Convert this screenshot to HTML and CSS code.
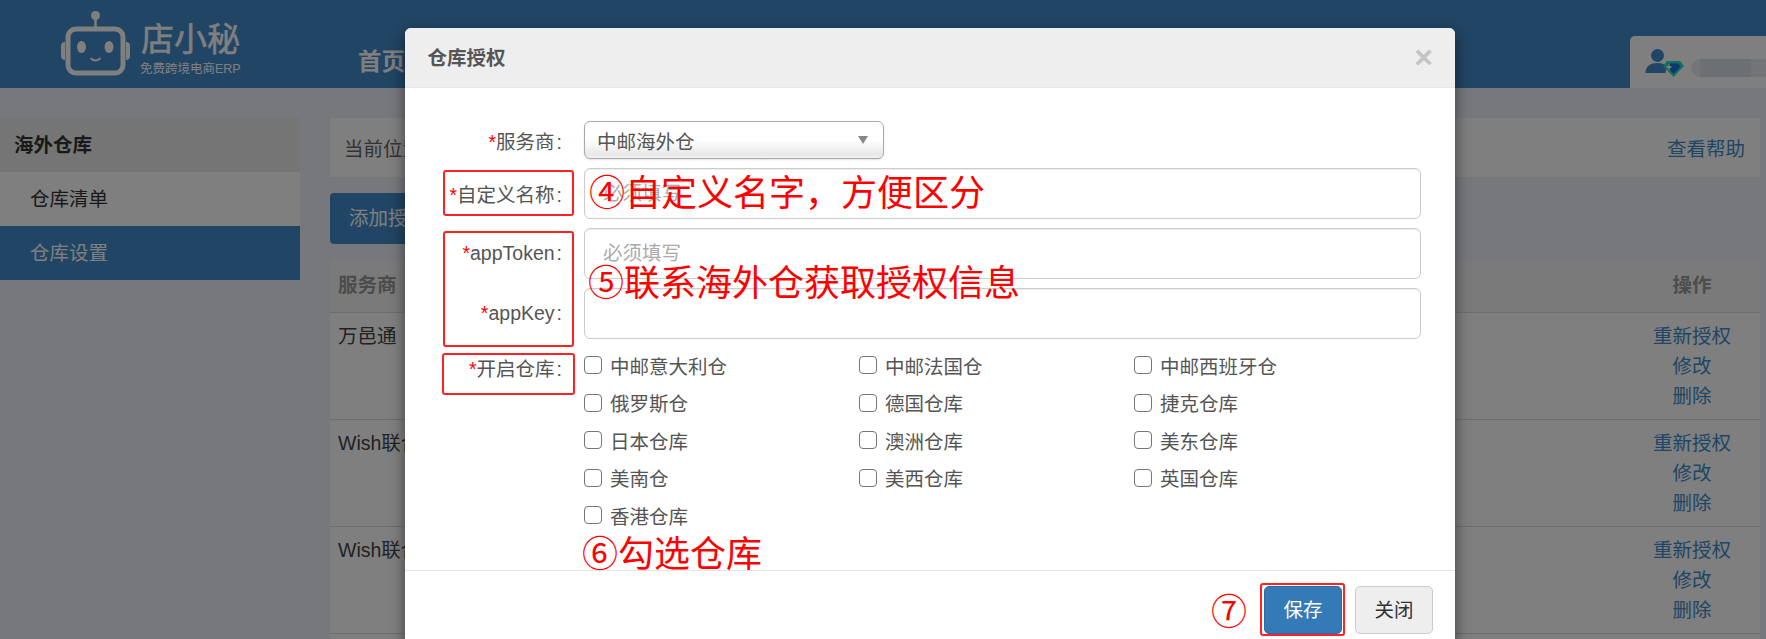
FILE: index.html
```html
<!DOCTYPE html>
<html lang="zh-CN">
<head>
<meta charset="utf-8">
<title>仓库授权</title>
<link rel="stylesheet" href="styles.css">
</head>
<body>
<div class="page">
  <header class="topbar">
    <div class="logo">
      <svg class="robot" width="72" height="66" viewBox="0 0 72 66" fill="none">
        <circle cx="35.500" cy="5.500" r="4.500" fill="#fff"/>
        <path d="M35.500 9v10" stroke="#fff" stroke-width="2.500"/>
        <rect x="8" y="19" width="55" height="44" rx="8" stroke="#fff" stroke-width="5"/>
        <path d="M5 32a4 4 0 0 0-4 4v10a4 4 0 0 0 4 4zM66 32a4 4 0 0 1 4 4v10a4 4 0 0 1-4 4z" fill="#fff"/>
        <ellipse cx="21.500" cy="37" rx="4.500" ry="6" fill="#fff"/>
        <ellipse cx="49" cy="37" rx="4.500" ry="6" fill="#fff"/>
        <path d="M31 48.500q4.500 4 9 0" stroke="#fff" stroke-width="1.800" stroke-linecap="round"/>
      </svg>
      <div class="logo-text">
        <div class="logo-name">店小秘</div>
        <div class="logo-sub">免费跨境电商ERP</div>
      </div>
    </div>
    <nav class="nav"><a class="nav-item">首页</a></nav>
    <div class="user-tab">
      <svg class="user-icon" width="40" height="28" viewBox="0 0 40 28">
        <circle cx="12.500" cy="6.500" r="6.500" fill="#428bca"/>
        <path d="M0.500 24c0-7 5-10 12-10 4 0 7 1 9 3l-1 7z" fill="#428bca"/>
        <path d="M22 12h13l4 5-10.500 11L18 17z" fill="#20dcc8"/>
        <path d="M25 14.500h8l2.500 3-7 7.500-6-7.500z" fill="#1a6fd0"/>
        <path d="M24 14.500l1 2.500 2.500 1-2.500 1-1 2.500-1-2.500-2.500-1 2.500-1z" fill="#fff"/>
      </svg>
      <div class="user-name"></div>
    </div>
  </header>

  <main class="main">
    <aside class="sidebar">
      <div class="side-title">海外仓库</div>
      <a class="side-item">仓库清单</a>
      <a class="side-item is-active">仓库设置</a>
    </aside>
    <section class="content">
      <div class="crumb">
        <span>当前位置</span>
        <a class="link">查看帮助</a>
      </div>
      <div class="toolbar"><a class="add-btn">添加授权</a></div>
      <table class="table">
        <thead>
          <tr><th>服务商</th><th class="col-actions">操作</th></tr>
        </thead>
        <tbody>
          <tr>
            <td>万邑通</td>
            <td class="col-actions"><a class="link">重新授权</a><a class="link">修改</a><a class="link">删除</a></td>
          </tr>
          <tr>
            <td>Wish联合</td>
            <td class="col-actions"><a class="link">重新授权</a><a class="link">修改</a><a class="link">删除</a></td>
          </tr>
          <tr>
            <td>Wish联合</td>
            <td class="col-actions"><a class="link">重新授权</a><a class="link">修改</a><a class="link">删除</a></td>
          </tr>
          <tr><td></td><td></td></tr>
        </tbody>
      </table>
    </section>
  </main>

  <div class="backdrop"></div>

  <div class="modal">
    <div class="modal-head">
      <h4 class="modal-title">仓库授权</h4>
      <span class="modal-close">×</span>
    </div>
    <form class="modal-body">
      <label class="field-label"><i>*</i>服务商<b>:</b></label>
      <div class="select-wrap">
        <select class="select"><option>中邮海外仓</option></select>
        <span class="select-arrow"></span>
      </div>

      <label class="field-label"><i>*</i>自定义名称<b>:</b></label>
      <input class="input" type="text" placeholder="必须填写">

      <label class="field-label"><i>*</i>appToken<b>:</b></label>
      <input class="input" type="text" placeholder="必须填写">

      <label class="field-label"><i>*</i>appKey<b>:</b></label>
      <input class="input" type="text">

      <label class="field-label field-label-top"><i>*</i>开启仓库<b>:</b></label>
      <div class="checks">
        <label class="check"><input type="checkbox">中邮意大利仓</label>
        <label class="check"><input type="checkbox">中邮法国仓</label>
        <label class="check"><input type="checkbox">中邮西班牙仓</label>
        <label class="check"><input type="checkbox">俄罗斯仓</label>
        <label class="check"><input type="checkbox">德国仓库</label>
        <label class="check"><input type="checkbox">捷克仓库</label>
        <label class="check"><input type="checkbox">日本仓库</label>
        <label class="check"><input type="checkbox">澳洲仓库</label>
        <label class="check"><input type="checkbox">美东仓库</label>
        <label class="check"><input type="checkbox">美南仓</label>
        <label class="check"><input type="checkbox">美西仓库</label>
        <label class="check"><input type="checkbox">英国仓库</label>
        <label class="check"><input type="checkbox">香港仓库</label>
      </div>
    </form>
    <div class="modal-foot">
      <button class="btn btn-primary" type="button">保存</button>
      <button class="btn" type="button">关闭</button>
    </div>
  </div>

  <div class="mark mark-name"></div>
  <div class="mark mark-keys"></div>
  <div class="mark mark-wh"></div>
  <div class="mark mark-save"></div>
  <div class="note note-4">④自定义名字，方便区分</div>
  <div class="note note-5">⑤联系海外仓获取授权信息</div>
  <div class="note note-6">⑥勾选仓库</div>
  <div class="note note-7">⑦</div>
</div>
</body>
</html>
```
FILE: styles.css
```css
* { box-sizing: border-box; }
html, body { margin: 0; height: 100%; overflow: hidden; }
body {
  font-family: "Liberation Sans", "Noto Sans CJK SC", sans-serif;
  font-size: 19.5px;
  color: #333;
  background: #eff0f8;
}
.page { position: relative; width: 1766px; height: 639px; overflow: hidden; }

/* top bar */
.topbar { display: flex; height: 88px; background: #428bca; padding-left: 60px; }
.logo { display: flex; width: 298px; color: #fff; }
.robot { margin-top: 10px; flex: none; }
.logo-text { margin-left: 9px; padding-top: 20px; }
.logo-name { font-size: 33px; line-height: 40px; white-space: nowrap; -webkit-text-stroke: .5px #fff; }
.logo-sub { font-size: 12.5px; line-height: 16px; margin-top: 1px; margin-left: -1px; white-space: nowrap; }
.nav { display: flex; align-items: center; height: 78px; padding-top: 42px; }
.nav-item { font-size: 23.500px; font-weight: 700; color: #fff; }
.user-tab {
  margin-left: auto; margin-top: 36px; width: 136px; height: 52px;
  background: #fff; border-radius: 5px 0 0 0;
  display: flex; align-items: flex-start; position: relative;
}
.user-icon { margin: 13px 0 0 15px; flex: none; overflow: visible; }
.user-name {
  position: absolute; left: 61px; top: 23px; right: 0; height: 18px;
  border-radius: 9px 0 0 9px;
  background: linear-gradient(90deg, #e8ebf0 12%, #d8dfe8 12%, #d8dfe8 80%, #e6e9ee 80%);
}

/* layout */
.main { display: flex; padding-top: 30px; }
.sidebar { width: 300px; flex: none; }
.side-title {
  height: 54px; line-height: 54px; padding-left: 14px;
  background: #eaeaea; font-weight: 700; color: #333;
}
.side-item { display: block; height: 54px; line-height: 54px; padding-left: 30px; background: #fff; color: #333; }
.side-item.is-active { background: #428bca; color: #fff; }
.content { width: 1430px; margin-left: 30px; flex: none; }
.link { color: #428bca; }
.crumb {
  height: 59px; background: #fff; display: flex; align-items: center;
  justify-content: space-between; padding: 0 15px 1px 14px; color: #666;
}
.toolbar { padding: 16px 0 15px; }
.add-btn {
  display: block; width: 118px; height: 51px; line-height: 51px; padding-left: 19px;
  background: #428bca; color: #fff; border-radius: 4px; white-space: nowrap;
}
.table { width: 100%; border-collapse: collapse; background: #fff; table-layout: fixed; }
.table th {
  height: 53px; padding: 0 8px 3px; text-align: left; font-weight: 700; color: #999;
  background: #f5f5f5; border-bottom: 1px solid #ddd;
}
.table td {
  height: 106.300px; padding: 8px; vertical-align: top; line-height: 30px; color: #444;
  border-bottom: 1px solid #ddd;
}
.table .col-actions { width: 136px; text-align: center; }
.table td.col-actions .link { display: block; color: #428bca; }
.backdrop { position: absolute; inset: 0; background: rgba(0, 0, 0, .5); }

/* modal */
.modal {
  position: absolute; left: 405px; top: 28px; width: 1050px; height: 680px;
  background: #fff; border-radius: 6px 6px 0 0;
  box-shadow: 0 5px 15px rgba(0, 0, 0, .5); color: #555;
}
.modal-head {
  height: 60px; background: #eee; border-bottom: 1px solid #e5e5e5;
  border-radius: 6px 6px 0 0; display: flex; align-items: center;
  justify-content: space-between; padding: 0 22px 2px 22.500px;
}
.modal-title { margin: 0; font-size: 19.500px; font-weight: 700; color: #555; }
.modal-close { font-size: 32px; font-weight: 700; line-height: 1; color: #c4c4c4; }
.modal-body {
  height: 482px; padding: 33px 34px 0 0;
  display: grid; grid-template-columns: 157px 1fr; column-gap: 22px; row-gap: 9px;
  align-items: center; align-content: start;
}
.field-label { text-align: right; white-space: nowrap; }
.field-label i { color: #f00; font-style: normal; }
.field-label b { font-weight: 400; margin-left: 2px; }
.field-label-top { align-self: start; padding-top: 5px; }
.select-wrap { position: relative; width: 300px; height: 38px; }
.select {
  display: block; width: 100%; height: 38px; padding: 3px 0 0 12px; appearance: none;
  border: 1px solid #aaa; border-radius: 6px; font: inherit; color: #555;
  background: linear-gradient(#fff 50%, #e8e8e8 90%, #f2f2f2);
  box-shadow: 0 1px 2px rgba(0, 0, 0, .12);
}
.select-arrow {
  position: absolute; right: 16px; top: 15px; width: 0; height: 0;
  border-style: solid; border-width: 8px 5px 0; border-color: #888 transparent transparent;
}
.input {
  display: block; width: 100%; height: 51px; padding: 0 18px; font: inherit; color: #555;
  border: 1px solid #ccc; border-radius: 6px; background: #fff;
  box-shadow: inset 0 1px 1px rgba(0, 0, 0, .075);
}
.input::placeholder { color: #aaa; opacity: 1; }
.checks {
  display: grid; grid-template-columns: repeat(3, 275px); grid-auto-rows: 37.500px;
  align-items: center; margin-top: -1.500px;
}
.check { display: flex; align-items: center; gap: 8px; white-space: nowrap; }
.check input {
  appearance: none; margin: 0; width: 18px; height: 18px; flex: none;
  border: 1.500px solid #767676; border-radius: 4px; background: #fff;
}
.modal-foot {
  border-top: 1px solid #e5e5e5; padding: 15px 22px 0 0;
  display: flex; justify-content: flex-end; gap: 13px;
}
.btn {
  width: 78px; height: 48px; padding: 0 0 3px; font: inherit; color: #333;
  background: #eee; border: 1px solid #ccc; border-radius: 5px;
}
.btn-primary { background: #337ab7; border-color: #2e6da4; color: #fff; }

/* screenshot annotations */
.mark { position: absolute; border: 2px solid #f22; border-radius: 3px; }
.mark-name { left: 443px; top: 170px; width: 131px; height: 46px; }
.mark-keys { left: 443px; top: 231px; width: 131px; height: 116px; }
.mark-wh { left: 442px; top: 353px; width: 133px; height: 42px; }
.mark-save { left: 1260px; top: 583px; width: 85px; height: 53px; }
.note {
  position: absolute; font-family: "Noto Sans CJK SC", sans-serif; font-size: 36px;
  line-height: 40px; color: #f00; white-space: nowrap;
}
.note-4 { left: 589px; top: 170px; }
.note-5 { left: 588px; top: 260px; }
.note-6 { left: 582px; top: 531px; }
.note-7 { left: 1211px; top: 589px; }
```
